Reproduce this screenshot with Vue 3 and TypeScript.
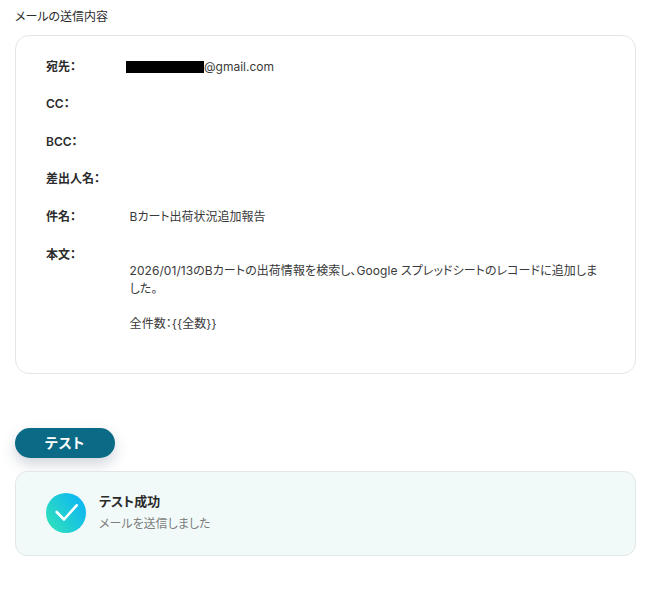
<script setup lang="ts">
const rows = [
  { label: '宛先：', value: '' },
  { label: 'CC：', value: '' },
  { label: 'BCC：', value: '' },
  { label: '差出人名：', value: '' },
  { label: '件名：', value: 'Bカート出荷状況追加報告' },
]
</script>

<template>
  <div class="page">
    <div class="section-title">メールの送信内容</div>
    <div class="mail-card">
      <div v-for="(row, i) in rows" :key="row.label" class="mail-row">
        <div class="mail-label">{{ row.label }}</div>
        <div class="mail-value">
          <template v-if="i === 0"><span class="redacted" />@gmail.com</template>
          <template v-else>{{ row.value }}</template>
        </div>
      </div>
      <div class="mail-row body-row">
        <div class="mail-label">本文：</div>
        <div class="mail-body">
          <p>2026/01/13のBカートの出荷情報を検索し、Google スプレッドシートのレコードに追加しました。</p>
          <p>全件数：{{ '{' + '{全数}' + '}' }}</p>
        </div>
      </div>
    </div>

    <button class="test-btn" type="button">テスト</button>

    <div class="result">
      <div class="result-icon">
        <svg width="40" height="40" viewBox="0 0 40 40" fill="none">
          <defs>
            <linearGradient id="okGrad" x1="0.05" y1="0.85" x2="0.95" y2="0.25">
              <stop offset="0" stop-color="#30e0bb" />
              <stop offset="1" stop-color="#0db7f2" />
            </linearGradient>
          </defs>
          <circle cx="20" cy="20" r="20" fill="url(#okGrad)" />
          <path d="M10.7 19l7.3 7.5 12.7-14.2" stroke="#fff" stroke-width="2.6" stroke-linecap="round" stroke-linejoin="round" />
        </svg>
      </div>
      <div>
        <div class="result-title">テスト成功</div>
        <div class="result-sub">メールを送信しました</div>
      </div>
    </div>
  </div>
</template>

<style>
html, body {
  margin: 0;
  background: #fff;
}
</style>

<style scoped>
.page {
  box-sizing: border-box;
  width: 663px;
  height: 592px;
  padding: 9px 27px 0 15px;
  font-family: Inter, 'Noto Sans CJK JP', sans-serif;
  font-feature-settings: 'palt';
  color: #2b2b2b;
  overflow: hidden;
}

.section-title {
  font-size: 12px;
  line-height: 16px;
  margin-bottom: 10px;
}

.mail-card {
  box-sizing: border-box;
  height: 339px;
  padding: 21.6px 30px 0;
  border: 1px solid #e3e6e8;
  border-radius: 14px;
}

.mail-row {
  display: flex;
  height: 37.6px;
  font-size: 12px;
  line-height: 18px;
}

.mail-label {
  width: 83.6px;
  flex: none;
  font-weight: 600;
}

.mail-value {
  color: #3a3a3a;
}

.redacted {
  display: inline-block;
  width: 78px;
  height: 12px;
  margin-left: -3.6px;
  vertical-align: -2px;
  background: #000;
}

.body-row {
  height: auto;
}

.mail-body {
  padding-top: 16px;
  width: 476px;
  color: #3a3a3a;
  line-height: 18px;
  letter-spacing: 0.06px;
}

.mail-body p {
  margin: 0 0 17px;
}

.test-btn {
  display: block;
  width: 100px;
  height: 30px;
  margin-top: 54px;
  padding: 0 0 3px;
  border: none;
  border-radius: 15px;
  background: #0b6a85;
  color: #fff;
  font: 700 14px Inter, 'Noto Sans CJK JP', sans-serif;
  letter-spacing: 0.8px;
  font-feature-settings: 'palt';
  box-shadow: 0 6px 14px rgba(40, 60, 90, 0.22);
}

.result {
  box-sizing: border-box;
  display: flex;
  align-items: center;
  gap: 13px;
  height: 85px;
  margin-top: 13px;
  padding: 0 30px;
  background: #f2faf9;
  border: 1px solid #e3e6e8;
  border-radius: 12px;
}

.result-icon {
  width: 40px;
  height: 40px;
  margin-top: -1px;
  line-height: 0;
}

.result-title {
  font-size: 13px;
  font-weight: 700;
  line-height: 18px;
  margin-bottom: 5px;
  margin-top: -2px;
}

.result-sub {
  font-size: 12px;
  line-height: 18px;
  color: #7d7d7d;
}
</style>
